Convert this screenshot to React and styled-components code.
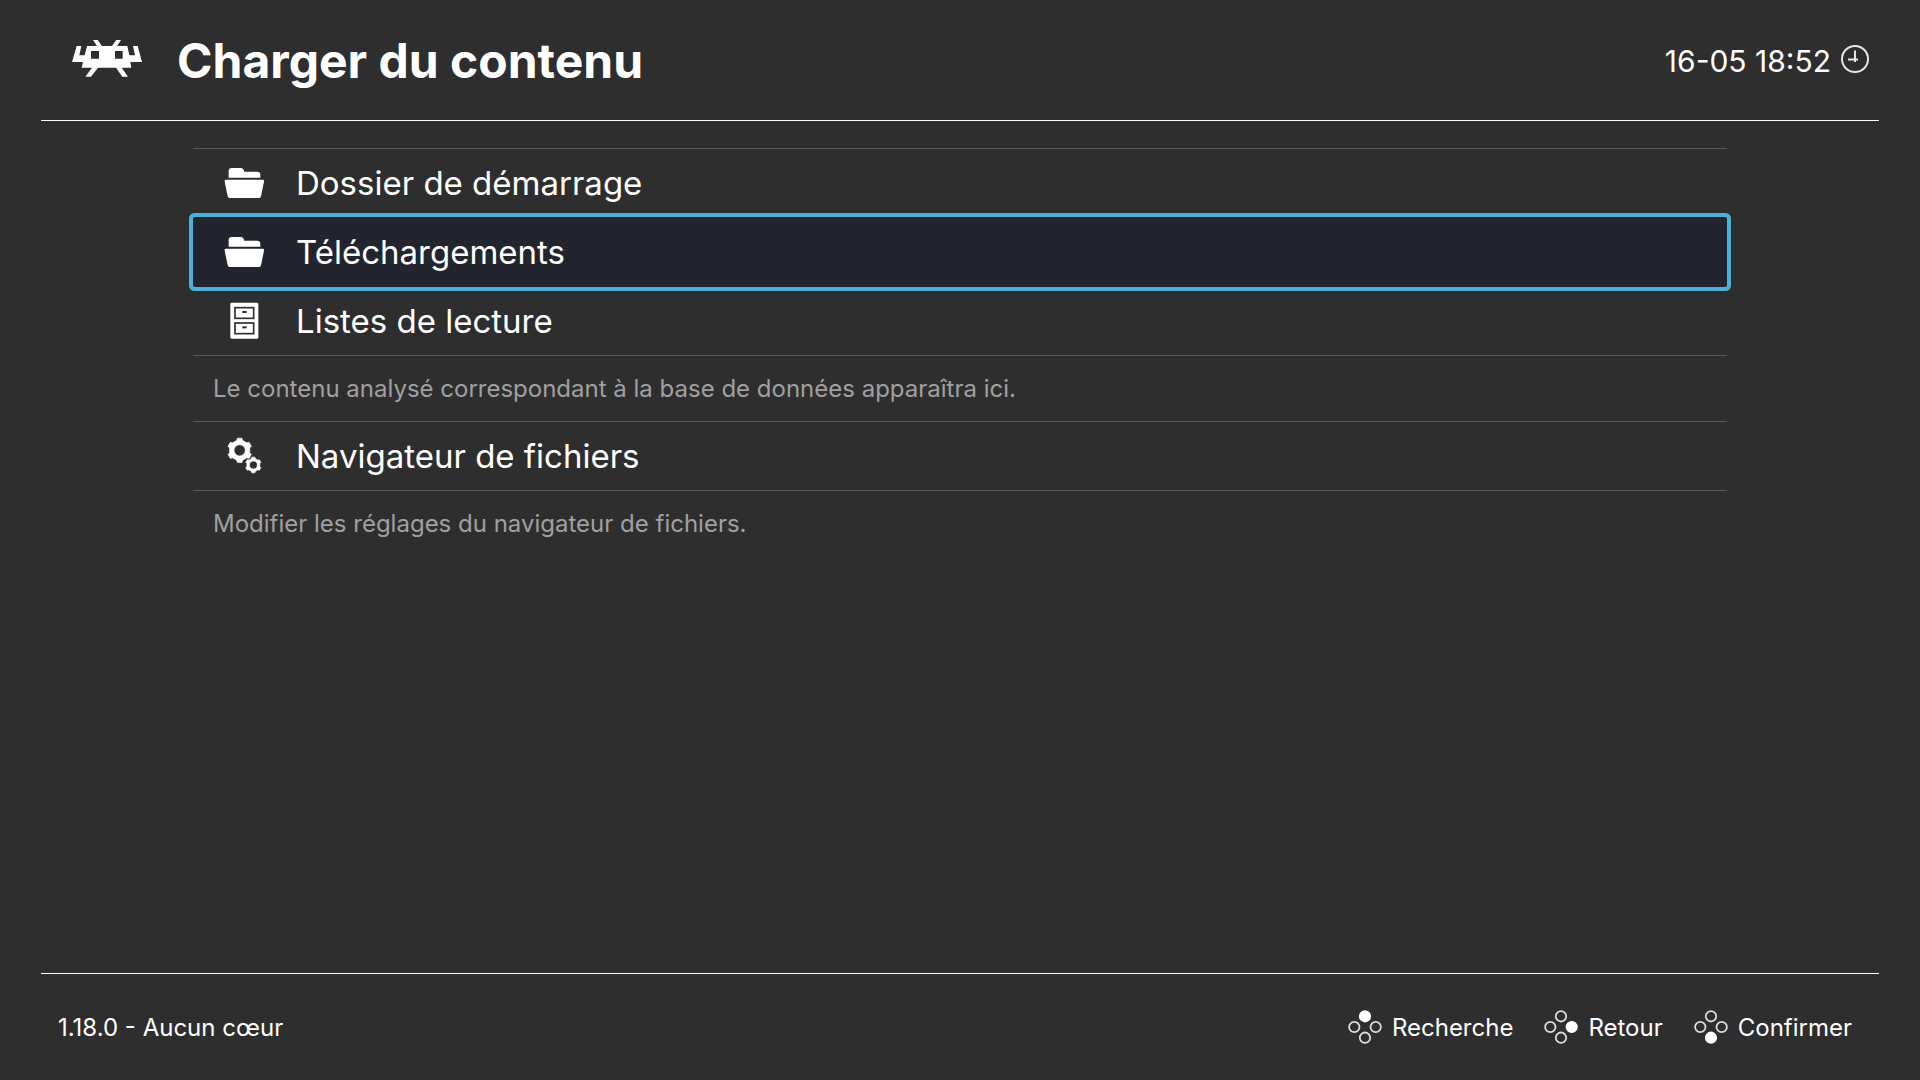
import React from "react";
import styled, { createGlobalStyle, css } from "styled-components";

const GlobalStyle = createGlobalStyle`
  *, *::before, *::after { box-sizing: border-box; }
  body {
    margin: 0;
    background: #2e2e2e;
    color: #fff;
    font-family: Inter, "Liberation Sans", sans-serif;
  }
`;

const Page = styled.div`
  display: flex;
  flex-direction: column;
  min-height: 100vh;
  padding: 0 41px;
`;

const Header = styled.header`
  display: flex;
  align-items: center;
  height: 121px;
  padding: 0 10px 3px 31px;
  border-bottom: 1px solid #fff;
`;

const Logo = styled.svg`
  width: 70px;
  height: 37px;
  flex: none;
`;

const Title = styled.h1`
  margin: 0 0 0 35px;
  padding-top: 4px;
  font-size: 48px;
  line-height: 64px;
  font-weight: 700;
`;

const Clock = styled.div`
  display: flex;
  align-items: center;
  gap: 10px;
  margin-left: auto;
  font-size: 30px;
  line-height: 40px;
`;

const Time = styled.time`
  padding-top: 4px;
`;

const ClockIcon = styled.svg`
  width: 28px;
  height: 28px;
`;

const Main = styled.main`
  flex: 1;
  padding: 27px 152px;
`;

const List = styled.ul`
  margin: 0;
  padding: 0;
  list-style: none;
`;

const Entry = styled.button`
  display: flex;
  align-items: center;
  gap: 31px;
  width: 100%;
  height: 69px;
  padding: 0 30px;
  border: 0;
  border-top: 1px solid #5a5a5a;
  background: none;
  color: inherit;
  font: inherit;
  font-size: 33px;
  line-height: 40px;
  text-align: left;
  ${({ $selected }) =>
    $selected &&
    css`
      position: relative;
      height: 70px;
      margin-bottom: -1px;
      padding-bottom: 1px;
      border-top-color: #22252e;
      border-radius: 2px;
      background: #22252e;
      box-shadow: 0 0 0 4px #4ab1d8;
    `}
`;

const EntryIcon = styled.svg`
  width: 42px;
  height: 42px;
  flex: none;
`;

const Label = styled.span`
  padding-top: 2px;
`;

const Sublabel = styled.p`
  height: 66px;
  margin: 0;
  padding: 17px 20px;
  border-top: 1px solid #5a5a5a;
  color: #a0a0a0;
  font-size: 24px;
  line-height: 32px;
`;

const Footer = styled.footer`
  display: flex;
  align-items: center;
  justify-content: space-between;
  height: 107px;
  padding: 0 27px 0 17px;
  border-top: 1px solid #fff;
  font-size: 24px;
  line-height: 32px;
`;

const Hints = styled.nav`
  display: flex;
  gap: 31px;
`;

const Hint = styled.button`
  display: flex;
  align-items: center;
  gap: 10px;
  padding: 0;
  border: 0;
  background: none;
  color: inherit;
  font: inherit;
`;

const PadIcon = styled.svg`
  width: 34px;
  height: 34px;
  flex: none;
`;

const FolderIcon = () => (
  <EntryIcon viewBox="0 0 126 126" fill="#fff" aria-hidden="true">
    <path d="M17 47V27q0-9 9-9h28q6 0 8 6l2 5h38q10 0 10 9v9z" />
    <path d="M8 53h111q5 0 4 6l-9 44q-1 5-6 5H20q-5 0-6-5L5 59q-1-6 3-6z" />
  </EntryIcon>
);

const CabinetIcon = () => (
  <EntryIcon viewBox="0 0 126 126" aria-hidden="true">
    <rect x="22" y="8" width="84" height="108" rx="4" fill="#fff" />
    {[23, 69].map((y) => (
      <g key={y}>
        <rect x="36" y={y} width="56" height="32" fill="#fff" stroke="#2e2e2e" strokeWidth="5" />
        <rect x="58" y={y + 10} width="13" height="6" fill="#2e2e2e" />
      </g>
    ))}
  </EntryIcon>
);

const gearPath = (cx, cy, outer, body, teeth) => {
  const points = [];
  const step = (Math.PI * 2) / teeth;
  for (let i = 0; i < teeth; i += 1) {
    const mid = i * step - Math.PI / 2;
    [[-0.28, body], [-0.18, outer], [0.18, outer], [0.28, body]].forEach(([k, r]) => {
      const a = mid + k * step;
      points.push(`${cx + r * Math.cos(a)} ${cy + r * Math.sin(a)}`);
    });
  }
  return `M${points.join("L")}Z`;
};

const ring = (cx, cy, r) => `M${cx - r} ${cy}a${r} ${r} 0 1 0 ${2 * r} 0a${r} ${r} 0 1 0 ${-2 * r} 0Z`;

const GearsIcon = () => (
  <EntryIcon viewBox="0 0 126 126" fill="#fff" fillRule="evenodd" strokeLinejoin="round" aria-hidden="true">
    <path d={gearPath(50, 46, 37, 31, 6) + ring(50, 46, 17)} stroke="#fff" strokeWidth="2" />
    <path d={gearPath(91, 90, 24, 20, 6) + ring(91, 90, 12)} stroke="#fff" strokeWidth="2" />
  </EntryIcon>
);

const PAD = [
  ["top", 17, 6.3],
  ["left", 6.3, 17],
  ["right", 27.7, 17],
  ["bottom", 17, 27.7],
];

const Pad = ({ active }) => (
  <PadIcon viewBox="0 0 34 34" aria-hidden="true">
    {PAD.map(([name, cx, cy]) => (
      <circle
        key={name}
        cx={cx}
        cy={cy}
        r="5.2"
        fill={name === active ? "#fff" : "none"}
        stroke={name === active ? "#fff" : "#dcdcdc"}
        strokeWidth="1.8"
      />
    ))}
  </PadIcon>
);

const entries = [
  { label: "Dossier de démarrage", Icon: FolderIcon },
  { label: "Téléchargements", Icon: FolderIcon, selected: true },
  {
    label: "Listes de lecture",
    Icon: CabinetIcon,
    sublabel: "Le contenu analysé correspondant à la base de données apparaîtra ici.",
  },
  {
    label: "Navigateur de fichiers",
    Icon: GearsIcon,
    sublabel: "Modifier les réglages du navigateur de fichiers.",
  },
];

const hints = [
  { label: "Recherche", active: "top" },
  { label: "Retour", active: "right" },
  { label: "Confirmer", active: "bottom" },
];

export default function App() {
  return (
    <>
      <GlobalStyle />
      <Page>
        <Header>
          <Logo viewBox="65 46 210 111" fill="#fff" fillRule="evenodd" aria-hidden="true">
            <path d="M79 64H93L87 92H103L110 64H140L128 46H142L155 64H185L198 46H212L200 64H231L237 92H254L248 64H262L275 112H240L243 129H214L233 156H216L197 129H143L122 156H105L125 129H94L98 112H65ZM122 79V102H146V79ZM194 79V102H217V79Z" />
          </Logo>
          <Title>Charger du contenu</Title>
          <Clock>
            <Time>16-05 18:52</Time>
            <ClockIcon viewBox="0 0 28 28" fill="none" stroke="#e6e6e6" strokeWidth="2" aria-hidden="true">
              <circle cx="14" cy="14" r="13" />
              <path d="M14 5.5V17M7 14.5H17" />
            </ClockIcon>
          </Clock>
        </Header>
        <Main>
          <List>
            {entries.map(({ label, Icon, selected, sublabel }) => (
              <li key={label}>
                <Entry type="button" $selected={selected}>
                  <Icon />
                  {label}
                </Entry>
                {sublabel && <Sublabel>{sublabel}</Sublabel>}
              </li>
            ))}
          </List>
        </Main>
        <Footer>
          <Label>1.18.0 - Aucun cœur</Label>
          <Hints>
            {hints.map(({ label, active }) => (
              <Hint key={label} type="button">
                <Pad active={active} />
                <Label>{label}</Label>
              </Hint>
            ))}
          </Hints>
        </Footer>
      </Page>
    </>
  );
}
